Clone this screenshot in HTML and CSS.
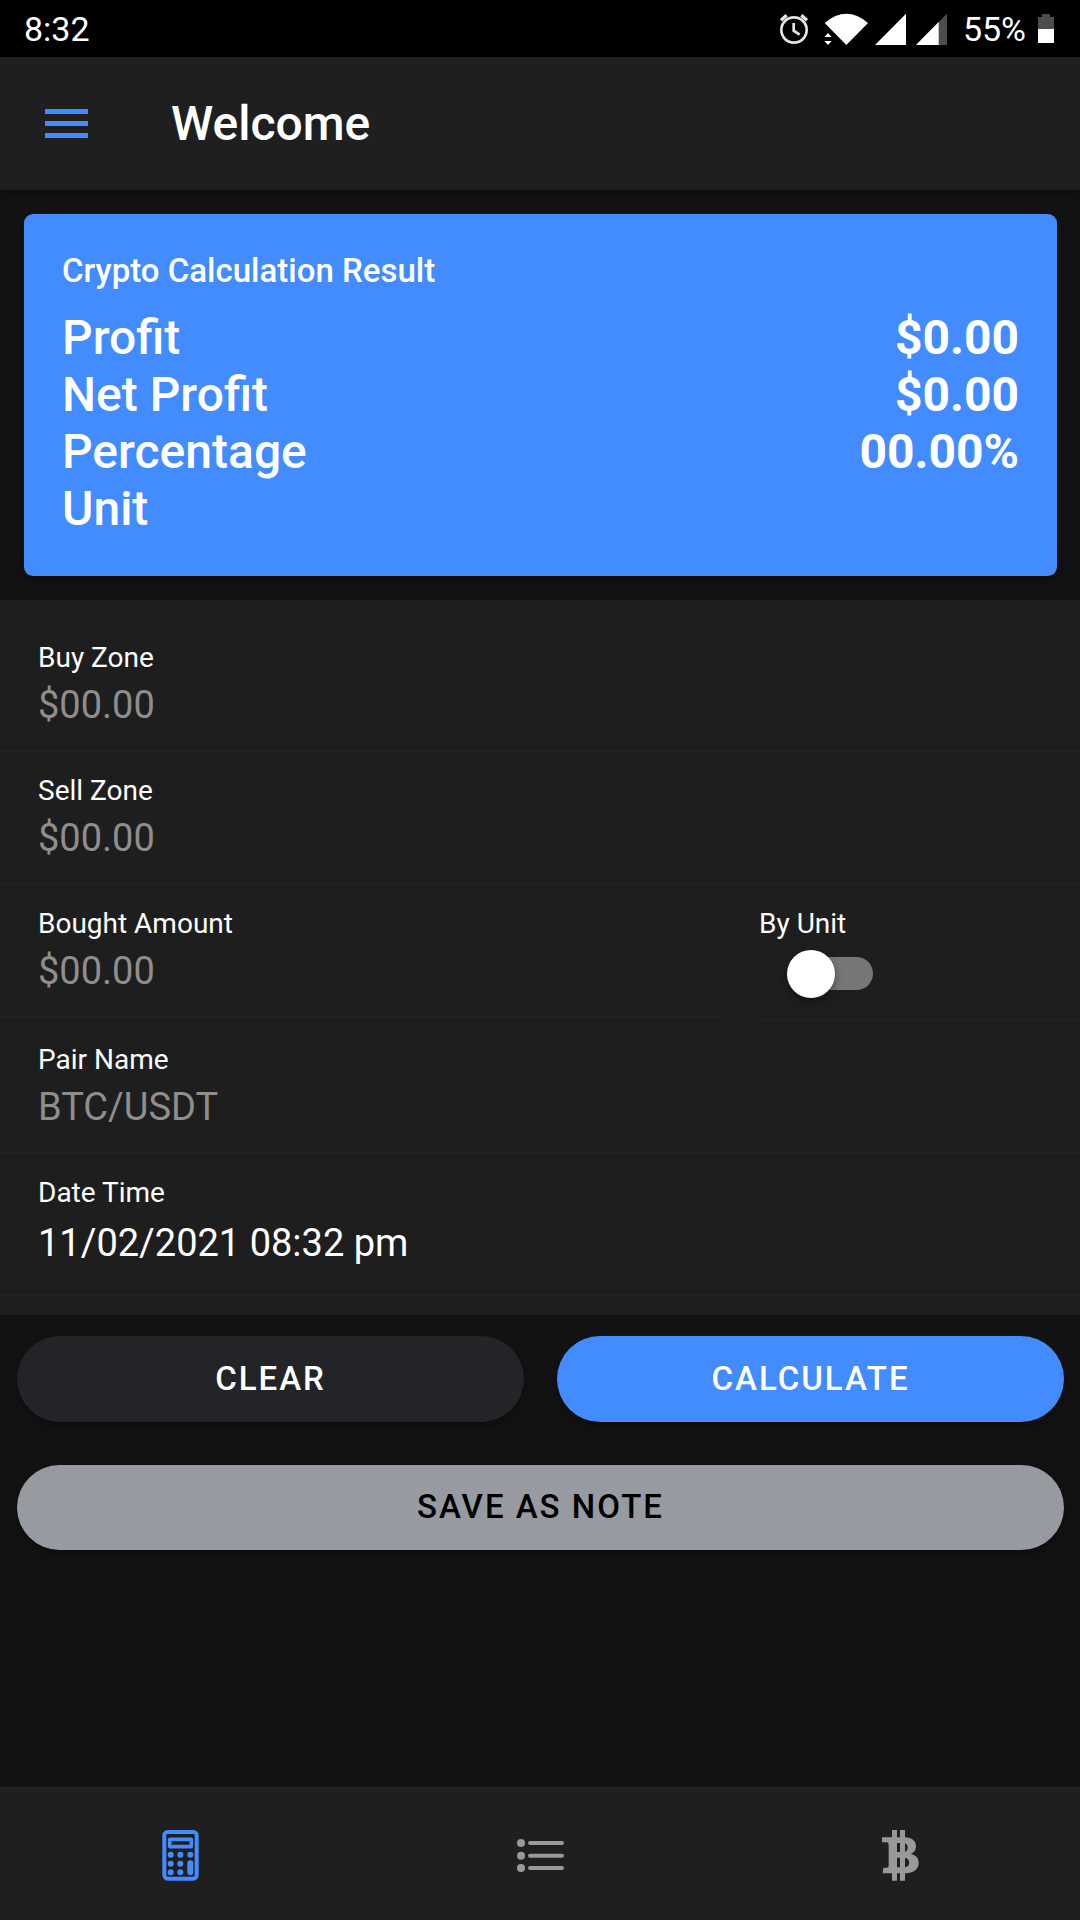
FILE: index.html
```html
<!DOCTYPE html>
<html lang="en">
<head>
<meta charset="utf-8">
<meta name="viewport" content="width=device-width, initial-scale=1">
<title>Welcome</title>
<link rel="stylesheet" href="styles.css">
</head>
<body>
<div class="status">
  <span>8:32</span>
  <div class="status-icons">
    <svg width="266" height="57" viewBox="0 0 798 171" fill="#fff" aria-hidden="true">
      <g transform="translate(-42 0)">
        <g fill="none" stroke="#e4e4e4" stroke-width="8">
          <circle cx="102" cy="87" r="38"/>
          <path d="M101 66v23l18 12"/>
          <path d="M63 58l17-15M141 58l-17-15" stroke-width="10"/>
        </g>
        <path d="M194 66Q259 11 324 66L259 132Z"/>
        <path d="M193 108h22l-11-12zM193 120h22l-11 12z"/>
        <path d="M345 132L438 38V132Z"/>
        <path d="M468 132L561 38V132Z" fill="#4d4d4d"/>
        <path d="M468 132L536 63V132Z"/>
      </g>
    </svg>
  </div>
  <span class="battery-text">55%</span>
  <svg width="18" height="30" viewBox="0 0 18 30" aria-hidden="true">
    <path d="M5 0h8v3h4v13H1V3h4z" fill="#4d4d4d"/><path d="M1 15h16v14H1z" fill="#fff"/>
  </svg>
</div>

<header class="header">
  <button class="menu" type="button" aria-label="Menu">
    <svg width="43" height="29" viewBox="0 0 43 29" fill="#428cff" aria-hidden="true">
      <path d="M0 0h43v5H0zM0 12h43v5H0zM0 24h43v5H0z"/>
    </svg>
  </button>
  <h1 class="title">Welcome</h1>
</header>

<main class="content">
  <section class="card">
    <h2 class="card-title">Crypto Calculation Result</h2>
    <dl class="results">
      <dt>Profit</dt><dd>$0.00</dd>
      <dt>Net Profit</dt><dd>$0.00</dd>
      <dt>Percentage</dt><dd>00.00%</dd>
      <dt>Unit</dt><dd></dd>
    </dl>
  </section>

  <form>
    <div class="fields">
      <div class="item">
        <label for="buy">Buy Zone</label>
        <input class="text" id="buy" type="text" placeholder="$00.00">
      </div>
      <div class="item">
        <label for="sell">Sell Zone</label>
        <input class="text" id="sell" type="text" placeholder="$00.00">
      </div>
      <div class="split">
        <div class="item">
          <label for="amount">Bought Amount</label>
          <input class="text" id="amount" type="text" placeholder="$00.00">
        </div>
        <div class="item item-toggle">
          <label for="unit">By Unit</label>
          <input class="toggle" id="unit" type="checkbox" role="switch">
        </div>
      </div>
      <div class="item">
        <label for="pair">Pair Name</label>
        <input class="text" id="pair" type="text" placeholder="BTC/USDT">
      </div>
      <div class="item item-date">
        <label for="date">Date Time</label>
        <input class="text" id="date" type="text" value="11/02/2021 08:32 pm">
      </div>
    </div>
    <div class="actions">
      <button class="btn dark" type="reset">CLEAR</button>
      <button class="btn primary" type="button">CALCULATE</button>
      <button class="btn medium" type="button">SAVE AS NOTE</button>
    </div>
  </form>
</main>

<nav class="tabs">
  <a class="tab active" href="#calculator" aria-label="Calculator">
    <svg width="57" height="57" viewBox="96 141 171 171" aria-hidden="true">
      <g fill="none" stroke="currentColor">
        <rect x="133" y="156" width="97" height="140" rx="10" stroke-width="12"/>
        <rect x="149" y="178" width="65" height="22" rx="1" stroke-width="11"/>
        <path d="M211 250v27" stroke-width="18" stroke-linecap="round"/>
      </g>
      <g fill="currentColor">
        <circle cx="152" cy="224" r="9"/><circle cx="181" cy="224" r="9"/><circle cx="211" cy="224" r="9"/>
        <circle cx="152" cy="251" r="9"/><circle cx="181" cy="251" r="9"/>
        <circle cx="152" cy="277" r="9"/><circle cx="181" cy="277" r="9"/>
      </g>
    </svg>
  </a>
  <a class="tab" href="#notes" aria-label="Notes">
    <svg width="57" height="57" viewBox="96 141 171 171" aria-hidden="true">
      <g fill="currentColor">
        <circle cx="123" cy="189" r="12"/><circle cx="123" cy="227" r="12"/><circle cx="123" cy="264" r="12"/>
      </g>
      <path d="M150 189h96M150 227h96M150 264h96" stroke="currentColor" stroke-width="12" stroke-linecap="round"/>
    </svg>
  </a>
  <a class="tab" href="#coins" aria-label="Coins">
    <svg width="57" height="57" viewBox="96 141 171 171" fill="currentColor" aria-hidden="true">
      <path fill-rule="evenodd" d="M156 150h15v22h9v-22h15v22C219 174 228 184 228 199C228 211 222 218 212 222C228 226 236 234 236 248C236 269 220 279 195 280v22h-15v-22h-9v22h-15v-22h-28l2-17h11q5 0 5-6v-63q0-7-6-7h-14v-15h30zM171 189v27h9v-27zM195 190v26C206 213 206 193 195 190zM171 233v29h9v-29zM195 233v29C212 260 212 236 195 233z"/>
    </svg>
  </a>
</nav>
</body>
</html>
```
FILE: styles.css
```css
* { box-sizing: border-box; }

body {
  margin: 0;
  min-height: 100vh;
  display: flex;
  flex-direction: column;
  background: #121212;
  color: #fff;
  font-family: Roboto, "Liberation Sans", sans-serif;
}

h1, h2, dl, dd { margin: 0; }
svg { display: block; }
button, input { font: inherit; color: inherit; }

.status {
  height: 57px;
  padding: 1px 25px 0 24px;
  display: flex;
  align-items: center;
  background: #000;
  font-size: 34px;
}
.status-icons {
  width: 189px;
  margin-left: auto;
  overflow: hidden;
}
.battery-text { margin-right: 11px; }

.header {
  height: 133px;
  padding-left: 45px;
  display: flex;
  align-items: center;
  gap: 83px;
  background: #1f1f1f;
  box-shadow: 0 2px 10px rgba(0, 0, 0, 0.4);
}
.menu {
  padding: 0;
  border: 0;
  background: none;
}
.title {
  font-size: 48px;
  font-weight: 500;
  line-height: 57px;
}

.content { flex: 1; }

.card {
  margin: 24px 23px 24px 24px;
  padding: 38px 38px 39px;
  background: #428cff;
  border-radius: 9px;
  box-shadow: 0 4px 6px rgba(0, 0, 0, 0.3);
}
.card-title {
  margin-bottom: 19px;
  font-size: 33px;
  font-weight: 500;
  line-height: 38px;
}
.results {
  display: grid;
  grid-template-columns: 1fr auto;
  font-size: 48px;
  font-weight: 500;
  line-height: 57px;
}
.results dd {
  font-weight: 700;
  text-align: right;
}

.fields {
  padding: 19px 0;
  background: #1e1e1e;
}
.item {
  display: flex;
  flex-direction: column;
  gap: 9px;
  padding: 22px 38px;
  border-bottom: 2px solid #222;
}
.item label {
  font-size: 28px;
  line-height: 33px;
}
.text {
  width: 100%;
  height: 45px;
  padding: 0;
  border: 0;
  outline: 0;
  background: none;
  font-size: 38px;
  line-height: 45px;
}
.text::placeholder {
  color: #8e8e8e;
  opacity: 1;
}
.split {
  display: grid;
  grid-template-columns: 2fr 1fr;
  align-items: start;
}
.item-toggle {
  margin-left: 39px;
  padding-left: 0;
}
.item-date {
  gap: 12px;
  padding-bottom: 28px;
}

.toggle {
  appearance: none;
  width: 86px;
  height: 33px;
  margin: 8px 28px 7px;
  display: flex;
  align-items: center;
  border-radius: 17px;
  background: #777;
}
.toggle::before {
  content: "";
  flex: none;
  width: 48px;
  height: 48px;
  border-radius: 50%;
  background: #fff;
  box-shadow: 0 4px 8px rgba(0, 0, 0, 0.4);
}
.toggle:checked { justify-content: flex-end; }

.actions {
  display: grid;
  grid-template-columns: 1fr 1fr;
  gap: 43px 33px;
  padding: 21px 16px 21px 17px;
}
.btn {
  height: 86px;
  padding: 0 0 2px;
  border: 0;
  border-radius: 43px;
  font-size: 33px;
  font-weight: 500;
  letter-spacing: 2px;
  box-shadow: 0 4px 6px rgba(0, 0, 0, 0.3);
}
.dark { background: #222428; }
.primary { background: #428cff; }
.medium {
  grid-column: 1 / -1;
  height: 85px;
  background: #989aa2;
  color: #000;
}

.tabs {
  height: 133px;
  display: grid;
  grid-template-columns: repeat(3, 1fr);
  border-top: 2px solid #232323;
  background: #1f1f1f;
}
.tab {
  display: flex;
  align-items: center;
  justify-content: center;
  padding-top: 2px;
  color: #999;
}
.active { color: #428cff; }
```
